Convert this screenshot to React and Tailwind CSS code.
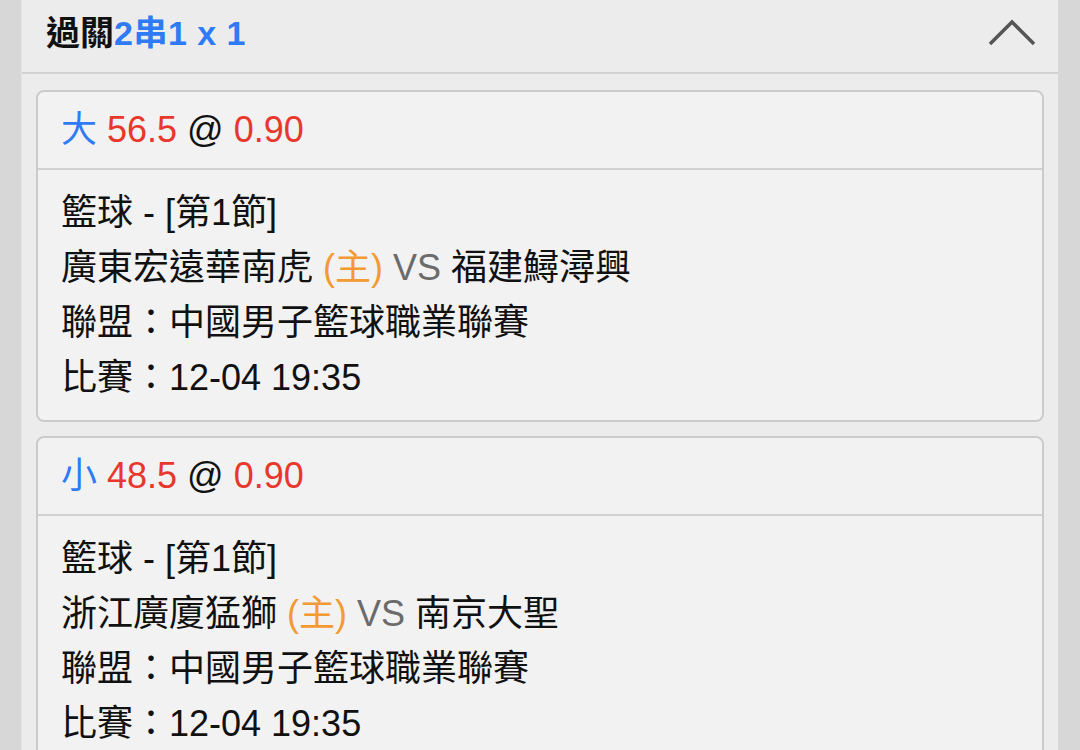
import React from "react";

const FONT = { fontFamily: '"Liberation Sans", "Noto Sans CJK TC", sans-serif' };

function Card({ side, line, odds, teamA, teamB }) {
  return (
    <div className="rounded-[8px] border-2 border-[#cbcbcb] bg-[#f2f2f2]">
      <div className="flex h-[78px] items-center border-b-2 border-[#d0d0d0] px-[23px] text-[36px]">
        <span className="text-[#2f7bf5]">{side}</span>
        <span className="ml-[10px] text-[#e8372c]">{line}</span>
        <span className="ml-[10px] text-[#111]">@</span>
        <span className="ml-[10px] text-[#e8372c]">{odds}</span>
      </div>
      <div className="px-[23px] pt-[15px] pb-[15px] text-[36px] leading-[55px] text-[#111]">
        <div>籃球 - [第1節]</div>
        <div>
          {teamA} <span className="text-[#f39a32]">(主)</span>{" "}
          <span className="text-[#6b6b6b]">VS</span> {teamB}
        </div>
        <div>聯盟：中國男子籃球職業聯賽</div>
        <div>比賽：12-04 19:35</div>
      </div>
    </div>
  );
}

export default function App() {
  return (
    <div className="flex h-[750px] w-[1080px] overflow-hidden bg-[#d7d7d7]" style={FONT}>
      <div className="ml-[21px] w-[1037px] border-l border-[#e4e4e4] bg-[#ececec]">
        <div className="flex h-[74px] items-center justify-between border-b-2 border-[#d2d2d2] pl-[24px] pr-[22px]">
          <div className="mb-[6px] text-[34px] font-bold text-[#111]">
            過關<span className="tracking-[0.5px] text-[#2f7bf5]">2串1 x 1</span>
          </div>
          <svg width="48" height="30" viewBox="0 0 48 30" className="mt-[-7px]">
            <polyline points="2,26 24,4 46,26" fill="none" stroke="#555" strokeWidth="3.5" />
          </svg>
        </div>
        <div className="flex flex-col gap-[14px] px-[14px] pt-[16px]">
          <Card side="大" line="56.5" odds="0.90" teamA="廣東宏遠華南虎" teamB="福建鱘潯興" />
          <Card side="小" line="48.5" odds="0.90" teamA="浙江廣廈猛獅" teamB="南京大聖" />
        </div>
      </div>
    </div>
  );
}
